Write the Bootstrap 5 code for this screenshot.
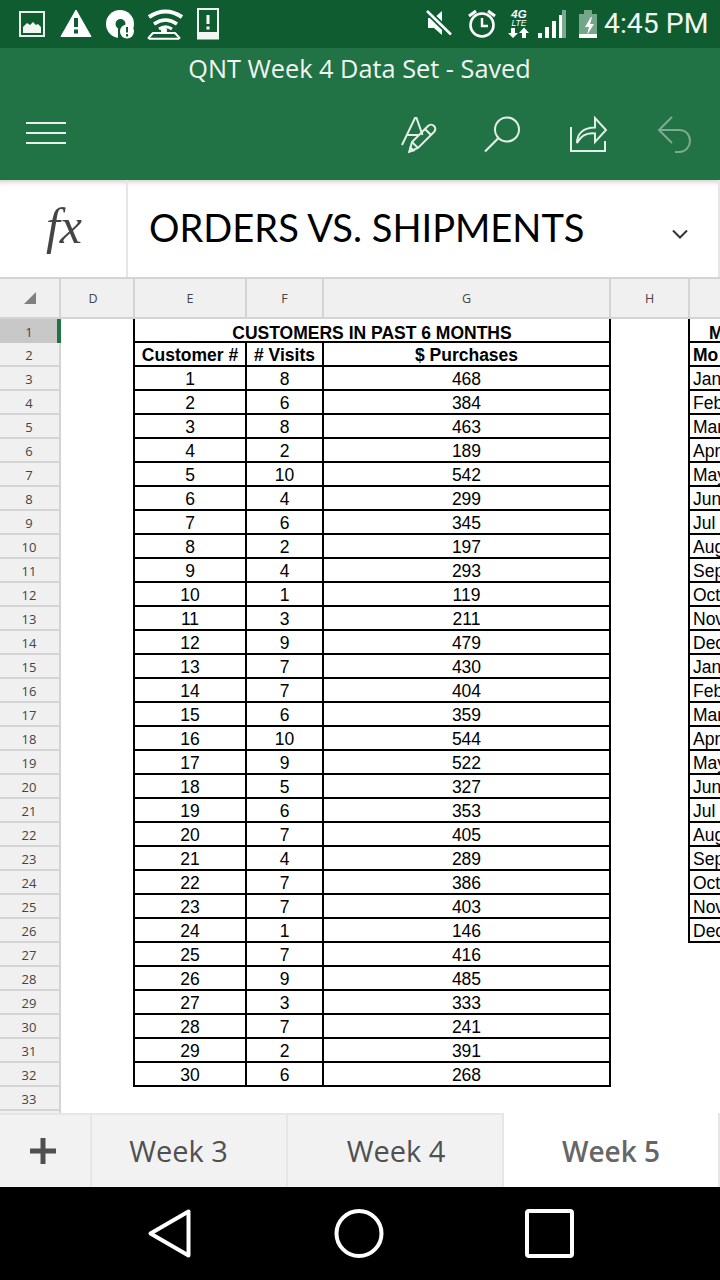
<!DOCTYPE html>
<html lang="en">
<head>
<meta charset="utf-8">
<title>QNT Week 4 Data Set</title>
<link href="https://cdn.jsdelivr.net/npm/bootstrap@5.3.0/dist/css/bootstrap.min.css" rel="stylesheet">
<style>
html,body{margin:0;padding:0;width:720px;height:1280px;overflow:hidden;background:#fff}
.phone{width:720px;height:1280px;font-family:"Open Sans",sans-serif}
.sys-bar{height:48px;background:#0f5c31;color:#f2f6f3}
.sys-time{font-family:Roboto,sans-serif;font-size:28.4px;line-height:48px;margin-left:4px;width:116px}
.sys-right{margin-left:auto}
.lte-txt{font-family:"Liberation Sans",sans-serif;font-weight:700}
.app-bar{height:132px;background:#217346;color:#fff}
.app-title{height:42px;line-height:41px;font-size:25.3px;text-align:center;padding-right:1px;color:#f1f6f3}
.app-tools{height:90px}
.burger{width:40px;margin:32px 0 0 26px}
.burger i{display:block;height:2px;background:#e9f1ec;margin-bottom:8px}
.tools-svg{margin-left:auto;display:block}
.fx-bar{height:99px;background:#fff;border-bottom:2px solid #d4d4d4;box-shadow:inset 0 7px 6px -6px #bdbdbd}
.fx-cell{width:128px;border-right:2px solid #e6e6e6;font-family:"Liberation Serif",serif;font-style:italic;font-size:50px;color:#444;line-height:92px;padding-left:2px}
.fx-text{flex:1;font-family:Lato,sans-serif;font-size:38.1px;line-height:94px;color:#000;padding-left:21px}
.fx-end{width:2px;background:#e6e6e6;height:100%}
.fx-chev{margin:49px 29px 0 0}
.col-bar{height:40px;background:#f0f0f0;border-bottom:2px solid #d4d4d4;font-size:12.5px;color:#444}
.col-h{height:38px;line-height:40px;text-align:center;border-right:2px solid #d4d4d4;flex:none}
.w-corner{width:61px}.w-d{width:74px;padding-right:8px}.w-e{width:112px}.w-f{width:77px}.w-g{width:287px}.w-h{width:79px}
.sheet-body{height:794px;overflow:hidden;background:#fff}
.row-heads{width:61px;flex:none;background:#f0f0f0;border-right:2px solid #d4d4d4;font-size:13px;color:#444;position:relative}
.rh{height:24px;line-height:25px;text-align:center;border-bottom:2px solid #d4d4d4;padding-right:1px}
.rh-on{background:#c8c8c8;border-bottom-color:#c8c8c8;line-height:26px}
.rh-mark{position:absolute;left:57px;top:0;width:4px;height:24px;background:#217346}
.gap-d{width:72px;flex:none}
.gap-h{width:77px;flex:none}
.sheet-tbl{table-layout:fixed;border-collapse:separate;border-spacing:0;font-family:"Liberation Sans",sans-serif;font-size:17.5px;color:#000;flex:none;align-self:flex-start}
.sheet-tbl td{height:24px;padding:2px 0 0;line-height:20px;text-align:center;border-right:2px solid #000;border-bottom:2px solid #000;white-space:nowrap;overflow:hidden}
.sheet-tbl td:first-child{border-left:2px solid #000}
.sheet-tbl .hd{font-weight:700}
.sheet-tbl tr:first-child td{padding-top:6px;line-height:16px}
.tbl-side{width:32px}
.tbl-side td{text-align:left;padding-left:3px;border-right:0}
.tbl-side .mh{padding-left:19px}
.tab-bar{height:74px;background:#f2f2f2;border-top:2px solid #e6e6e6;font-size:29px;color:#505050}
.sheet-tab{height:100%;line-height:72px;text-align:center;border-right:2px solid #e6e6e6;flex:none}
.tab-add{width:92px;padding-right:4px}
.tab-3{width:196px;padding-right:21px}.tab-4{width:216px;padding-left:2px}
.tab-5{width:216px;background:#fff;margin-top:-2px;height:74px;font-size:28px;font-weight:600;color:#666;line-height:76px}
.nav-bar{height:93px;background:#000}
</style>
</head>
<body>
<div class="phone d-flex flex-column">

<div class="sys-bar d-flex align-items-start flex-none">
<svg width="230" height="48" viewBox="0 0 230 48" fill="none" role="img" aria-label="Notifications">
  <rect x="20" y="12" width="24" height="24" stroke="#e8efea" stroke-width="2"/>
  <path d="M23 33v-6l4-4 3 2 3-3 3 3 2-1 3 3v6z" fill="#f2f6f3"/>
  <path d="M76 10 91 36.500H61z" fill="#fff" stroke="#fff" stroke-linejoin="round"/>
  <path d="M76 18v9M76 29.500v4" stroke="#0f5c31" stroke-width="4"/>
  <circle cx="120" cy="24" r="14" fill="#fff"/>
  <circle cx="120.500" cy="24" r="5" fill="#0f5c31"/>
  <path d="M118 38v-10h16v10z" fill="#0f5c31"/>
  <circle cx="127" cy="31.500" r="7" fill="#fff"/>
  <path d="M127 27v5.500M127 34v2.500" stroke="#0f5c31" stroke-width="2"/>
  <path d="M149 17q16.500-11 33 0" stroke="#fff" stroke-width="4"/>
  <path d="M154 24q11.500-8 23 0" stroke="#fff" stroke-width="3.500"/>
  <path d="M159 29q6.500-4.500 13 0" stroke="#fff" stroke-width="3"/>
  <circle cx="164" cy="30.500" r="3" fill="#fff"/>
  <path d="M153 33h22l4.500 5-1 .7h-29l-1-.7z" stroke="#fff" stroke-width="2" stroke-linejoin="round"/>
  <rect x="198" y="9" width="20" height="29.500" stroke="#f2f6f3" stroke-width="2"/>
  <rect x="198" y="32" width="20" height="7" fill="#f2f6f3"/>
  <path d="M208 15v9M208 26.500v3" stroke="#fff" stroke-width="3"/>
</svg>
<svg class="sys-right" width="177" height="48" viewBox="423 0 177 48" fill="none" role="img" aria-label="Status">
  <path d="M428 18h6l8-7v24l-8-7h-6z" fill="#fff"/>
  <path d="M427 11 451 34.500" stroke="#0f5c31" stroke-width="6"/>
  <path d="M427 11 451 34.500" stroke="#fff" stroke-width="2.500"/>
  <circle cx="482" cy="25" r="11.500" stroke="#fff" stroke-width="2.600"/>
  <path d="M482 18v8h6" stroke="#fff" stroke-width="2.400"/>
  <path d="M469 16l7-5M495 16l-7-5" stroke="#fff" stroke-width="3"/>
  <text class="lte-txt" x="519" y="18" font-size="11.500" text-anchor="middle" font-style="italic" fill="#fff">4G</text>
  <text x="519" y="26" font-family="Liberation Sans" font-size="8.500" text-anchor="middle" font-style="italic" fill="#fff">LTE</text>
  <path d="M515 28v5h3l-5 5-5-5h3v-5zM526 38v-5h3l-5-5.500-5 5.500h3v5z" fill="#fff"/>
  <path d="M538 33h4v5h-4zM545 27h4v11h-4zM552 21h4v17h-4zM559 15h4v23h-4z" fill="#fff"/>
  <rect x="562" y="10" width="4" height="28" fill="#7ba98f"/>
  <path d="M579 14h5v-4h8v4h5v24h-18z" fill="#74a68a"/>
  <path d="M579 34h18v4h-18z" fill="#fff"/>
  <path d="M591 17l-6 10h4l-2 8 7-11h-4l2-7z" fill="#fff"/>
</svg>
<div class="sys-time">4:45 PM</div>
</div>

<div class="app-bar">
  <div class="app-title">QNT Week 4 Data Set - Saved</div>
  <div class="app-tools d-flex align-items-start">
    <div class="burger"><i></i><i></i><i></i></div>
    <svg class="tools-svg" width="324" height="90" viewBox="396 90 324 90" fill="none" stroke="#e4eee8" stroke-width="2" role="img" aria-label="Tools">
      <path d="M402 145 415 118h1.500l6 17M407 135h11"/>
      <path d="M409.500 151.500 412 142l16-16c2-2 4.500-1.500 6 0s2 4 0 6l-16 16z"/>
      <path d="M412 142l6 6M425 129l6 6M409.500 151.500l4-1-3-3z"/>
      <circle cx="507" cy="129.500" r="12"/>
      <path d="M498.500 138 485 151.500" stroke-width="2.200"/>
      <path d="M571 127v24h34v-10" stroke-width="2"/>
      <path d="M577 143c0-9 6-15.500 18-15.500V118l11 12-11 12v-8.500c-8-1-14 2-18 9.500z"/>
      <g stroke="#7fab92"><path d="M672 117 659 130l13 13M659 130h20c8 0 11 6 11 11s-4 11-11 11h-4"/></g>
    </svg>
  </div>
</div>

<div class="fx-bar d-flex">
  <div class="fx-cell text-center">fx</div>
  <div class="fx-text">ORDERS VS. SHIPMENTS</div>
  <svg class="fx-chev" width="18" height="11" viewBox="0 0 18 11" fill="none" stroke="#333" stroke-width="2"><path d="M2 1.500 9 8.500 16 1.500"/></svg>
  <div class="fx-end"></div>
</div>

<div class="col-bar d-flex">
  <div class="col-h w-corner d-flex align-items-center justify-content-center"><svg width="12" height="12" viewBox="0 0 12 12"><path d="M12 0V12H0z" fill="#808080"/></svg></div>
  <div class="col-h w-d">D</div>
  <div class="col-h w-e">E</div>
  <div class="col-h w-f">F</div>
  <div class="col-h w-g">G</div>
  <div class="col-h w-h">H</div>
</div>

<div class="sheet-body d-flex">
  <div class="row-heads">
    <div class="rh rh-on">1</div><div class="rh">2</div><div class="rh">3</div><div class="rh">4</div><div class="rh">5</div><div class="rh">6</div><div class="rh">7</div><div class="rh">8</div><div class="rh">9</div><div class="rh">10</div><div class="rh">11</div><div class="rh">12</div><div class="rh">13</div><div class="rh">14</div><div class="rh">15</div><div class="rh">16</div><div class="rh">17</div><div class="rh">18</div><div class="rh">19</div><div class="rh">20</div><div class="rh">21</div><div class="rh">22</div><div class="rh">23</div><div class="rh">24</div><div class="rh">25</div><div class="rh">26</div><div class="rh">27</div><div class="rh">28</div><div class="rh">29</div><div class="rh">30</div><div class="rh">31</div><div class="rh">32</div><div class="rh">33</div>
    <div class="rh-mark"></div>
  </div>
  <div class="gap-d"></div>
  <table class="sheet-tbl">
    <colgroup><col style="width:114px"><col style="width:77px"><col style="width:287px"></colgroup>
    <tbody>
    <tr><td colspan="3" class="hd">CUSTOMERS IN PAST 6 MONTHS</td></tr>
    <tr><td class="hd">Customer #</td><td class="hd"># Visits</td><td class="hd">$ Purchases</td></tr>
    <tr><td>1</td><td>8</td><td>468</td></tr>
    <tr><td>2</td><td>6</td><td>384</td></tr>
    <tr><td>3</td><td>8</td><td>463</td></tr>
    <tr><td>4</td><td>2</td><td>189</td></tr>
    <tr><td>5</td><td>10</td><td>542</td></tr>
    <tr><td>6</td><td>4</td><td>299</td></tr>
    <tr><td>7</td><td>6</td><td>345</td></tr>
    <tr><td>8</td><td>2</td><td>197</td></tr>
    <tr><td>9</td><td>4</td><td>293</td></tr>
    <tr><td>10</td><td>1</td><td>119</td></tr>
    <tr><td>11</td><td>3</td><td>211</td></tr>
    <tr><td>12</td><td>9</td><td>479</td></tr>
    <tr><td>13</td><td>7</td><td>430</td></tr>
    <tr><td>14</td><td>7</td><td>404</td></tr>
    <tr><td>15</td><td>6</td><td>359</td></tr>
    <tr><td>16</td><td>10</td><td>544</td></tr>
    <tr><td>17</td><td>9</td><td>522</td></tr>
    <tr><td>18</td><td>5</td><td>327</td></tr>
    <tr><td>19</td><td>6</td><td>353</td></tr>
    <tr><td>20</td><td>7</td><td>405</td></tr>
    <tr><td>21</td><td>4</td><td>289</td></tr>
    <tr><td>22</td><td>7</td><td>386</td></tr>
    <tr><td>23</td><td>7</td><td>403</td></tr>
    <tr><td>24</td><td>1</td><td>146</td></tr>
    <tr><td>25</td><td>7</td><td>416</td></tr>
    <tr><td>26</td><td>9</td><td>485</td></tr>
    <tr><td>27</td><td>3</td><td>333</td></tr>
    <tr><td>28</td><td>7</td><td>241</td></tr>
    <tr><td>29</td><td>2</td><td>391</td></tr>
    <tr><td>30</td><td>6</td><td>268</td></tr>
    </tbody>
  </table>
  <div class="gap-h"></div>
  <table class="sheet-tbl tbl-side">
    <colgroup><col style="width:32px"></colgroup>
    <tbody>
    <tr><td class="hd mh">M</td></tr>
    <tr><td class="hd">Mo</td></tr>
    <tr><td>Jan</td></tr><tr><td>Feb</td></tr><tr><td>Mar</td></tr><tr><td>Apr</td></tr><tr><td>May</td></tr><tr><td>Jun</td></tr><tr><td>Jul</td></tr><tr><td>Aug</td></tr><tr><td>Sep</td></tr><tr><td>Oct</td></tr><tr><td>Nov</td></tr><tr><td>Dec</td></tr>
    <tr><td>Jan</td></tr><tr><td>Feb</td></tr><tr><td>Mar</td></tr><tr><td>Apr</td></tr><tr><td>May</td></tr><tr><td>Jun</td></tr><tr><td>Jul</td></tr><tr><td>Aug</td></tr><tr><td>Sep</td></tr><tr><td>Oct</td></tr><tr><td>Nov</td></tr><tr><td>Dec</td></tr>
    </tbody>
  </table>
</div>

<div class="tab-bar d-flex">
  <div class="sheet-tab tab-add d-flex align-items-center justify-content-center"><svg width="26" height="26" viewBox="0 0 26 26"><path d="M10.500 0h5v10.500H26v5H15.500V26h-5V15.500H0v-5h10.500z" fill="#505050"/></svg></div>
  <div class="sheet-tab tab-3">Week 3</div>
  <div class="sheet-tab tab-4">Week 4</div>
  <div class="sheet-tab tab-5">Week 5</div>
</div>

<div class="nav-bar">
  <svg width="720" height="93" viewBox="0 1187 720 93" fill="none" stroke="#fff" stroke-width="4" stroke-linejoin="round" role="img" aria-label="Navigation">
    <path d="M188.500 1211.500V1255.500L150.500 1233.500z"/>
    <circle cx="359" cy="1233.500" r="22.500"/>
    <rect x="527" y="1211" width="45" height="45" rx="2"/>
  </svg>
</div>

</div>
<script src="https://cdn.jsdelivr.net/npm/bootstrap@5.3.0/dist/js/bootstrap.bundle.min.js"></script>
</body>
</html>
